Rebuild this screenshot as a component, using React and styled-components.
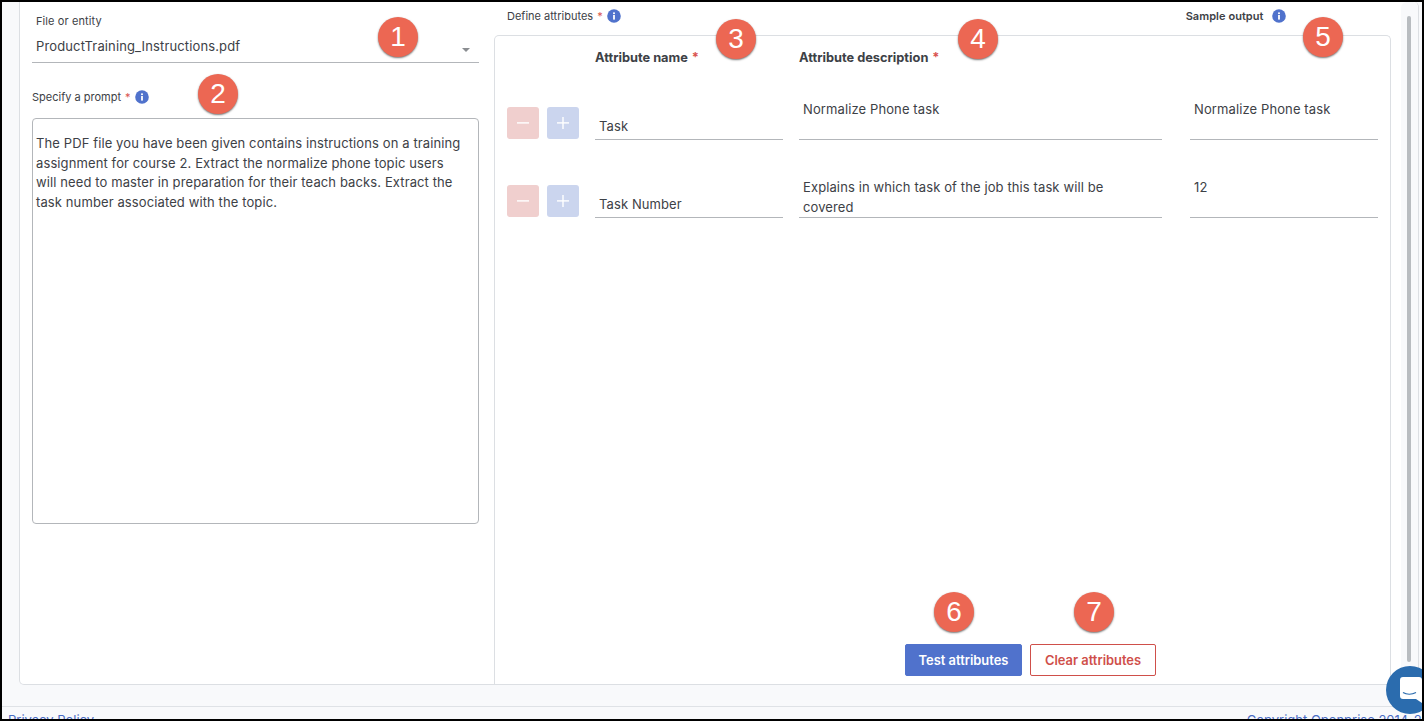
import React from "react";
import styled, { createGlobalStyle } from "styled-components";

const GlobalStyle = createGlobalStyle`
  html, body {
    margin: 0;
    height: 100%;
    overflow: hidden;
    background: #000;
  }
  * { box-sizing: border-box; }
`;

const Frame = styled.div`
  width: 1424px;
  height: 721px;
  padding: 2px;
  background: #000;
  font-family: Inter, "Noto Sans", sans-serif;
  color: #3d4146;
  overflow: hidden;
`;

const Page = styled.div`
  position: relative;
  height: 717px;
  background: #f8f9fb;
  display: flex;
  flex-direction: column;
  overflow: hidden;
`;

const Body = styled.div`
  height: 705px;
  flex: none;
  border-bottom: 1px solid #dfe2e6;
  padding: 0 3px 0 17px;
`;

const Card = styled.main`
  height: 683px;
  background: #fff;
  border: 1px solid #dcdfe3;
  border-top: 0;
  border-radius: 0 5px 5px 5px;
  display: flex;
`;

const LeftColumn = styled.section`
  width: 474px;
  flex: none;
  padding: 12px 15px 0 12px;
`;

const RightColumn = styled.section`
  flex: 1;
  display: flex;
  flex-direction: column;
  min-width: 0;
`;

const FieldLabel = styled.div`
  font-size: 11px;
  line-height: 14px;
  letter-spacing: 0.1px;
  padding-left: 4px;
`;

const SelectBox = styled.div`
  height: 35px;
  display: flex;
  align-items: center;
  justify-content: space-between;
  padding: 1px 4px 0 4px;
  font-size: 13px;
  letter-spacing: 0.13px;
  border-bottom: 1px solid #b3b6ba;
`;

const Caret = styled.span`
  width: 0;
  height: 0;
  margin-top: 8px;
  margin-right: 5px;
  border-left: 4px solid transparent;
  border-right: 4px solid transparent;
  border-top: 4px solid #8a8d91;
`;

const PromptLabel = styled.div`
  display: flex;
  align-items: center;
  margin-top: 26px;
  height: 16px;
  font-size: 11px;
`;

const Star = styled.span`
  color: #d9534f;
  margin-left: 4px;
`;

const InfoDot = styled.svg`
  width: 14px;
  height: 14px;
  margin-left: ${(p) => p.$gap}px;
  flex: none;
`;

const PromptBox = styled.div`
  margin-top: 13px;
  height: 406px;
  border: 1px solid #b3b6ba;
  border-radius: 4px;
  padding: 15px 12px 15px 3px;
  font-size: 13px;
  line-height: 19.6px;
  letter-spacing: 0.11px;
`;

const AttributesHead = styled.div`
  height: 33px;
  display: flex;
  align-items: center;
  padding: 0 0 6px 13px;
  font-size: 11px;
`;

const SampleLabel = styled.span`
  margin-left: 565px;
  font-weight: 600;
  letter-spacing: 0.05px;
`;

const AttributesPanel = styled.div`
  flex: 1;
  margin-right: 10px;
  border: 1px solid #dcdfe3;
  border-bottom: 0;
  border-radius: 5px 5px 0 0;
  display: flex;
  flex-direction: column;
`;

const gridColumns = "72px 188px 363px 188px";

const HeadRow = styled.div`
  display: grid;
  grid-template-columns: ${gridColumns};
  column-gap: 16px;
  padding: 14px 0 0 12px;
  font-size: 12.8px;
  font-weight: 700;
  line-height: 16px;
`;

const AttributeRow = styled.div`
  display: grid;
  grid-template-columns: ${gridColumns};
  column-gap: 16px;
  padding-left: 12px;
  height: 41px;
  margin-top: ${(p) => p.$top}px;
`;

const RowButtons = styled.div`
  display: flex;
  gap: 8px;
  align-self: end;
  margin-bottom: 1px;
`;

const SquareButton = styled.button`
  width: 32px;
  height: 32px;
  padding: 0;
  border: 0;
  border-radius: 3px;
  background: ${(p) => (p.$tone === "red" ? "#f0cfce" : "#cbd5ee")};
  display: flex;
  align-items: center;
  justify-content: center;
`;

const NameCell = styled.div`
  align-self: stretch;
  display: flex;
  align-items: flex-end;
  padding: 0 4px 3px;
  font-size: 13px;
  line-height: 20px;
  letter-spacing: 0.1px;
  border-bottom: 1px solid #b3b6ba;
`;

const TextCell = styled.div`
  align-self: stretch;
  padding: 0 24px 0 4px;
  font-size: 13px;
  line-height: 20px;
  letter-spacing: 0.11px;
  border-bottom: 1px solid #b3b6ba;
`;

const OutputCell = styled(TextCell)`
  margin-left: 12px;
  width: 188px;
`;

const ActionBar = styled.div`
  margin-top: auto;
  display: flex;
  gap: 8px;
  padding: 0 0 8px 410px;
`;

const ActionButton = styled.button`
  height: 32px;
  width: ${(p) => p.$width}px;
  border-radius: 2px;
  font-family: inherit;
  font-size: 12.9px;
  font-weight: 600;
  padding: 0;
  color: ${(p) => (p.$outline ? "#cf4f4a" : "#fff")};
  background: ${(p) => (p.$outline ? "#fff" : "#5072cc")};
  border: 1px solid ${(p) => (p.$outline ? "#cf4f4a" : "#5072cc")};
`;

const ScrollTrack = styled.div`
  width: 17px;
  flex: none;
  padding: 14px 6px 0 6px;
  background: #f8f9fb;
  border-radius: 6px 6px 0 0;
`;

const ScrollThumb = styled.div`
  width: 4px;
  height: 646px;
  border-radius: 2px;
  background: #b8bcc0;
`;

const FooterBar = styled.footer`
  flex: none;
  width: 1449px;
  display: flex;
  justify-content: space-between;
  padding: 6px 5px 0 6px;
  font-size: 13px;
  line-height: 14px;
  color: #4a6cc4;
`;

const Badge = styled.div`
  position: absolute;
  left: ${(p) => p.$x - 22}px;
  top: ${(p) => p.$y - 22}px;
  width: 40px;
  height: 40px;
  border-radius: 50%;
  background: #ec6753;
  box-shadow: 0 1px 2px rgba(0, 0, 0, 0.55);
  color: #fff;
  font-family: "Liberation Sans", Arial, sans-serif;
  font-size: 28px;
  line-height: 40px;
  text-align: center;
`;

const ChatBubble = styled.div`
  position: absolute;
  left: 1384px;
  top: 664px;
  width: 48px;
  height: 48px;
  border-radius: 50%;
  background: #2b6cae;
  display: flex;
  align-items: center;
  padding-left: 14px;
`;

const Info = ({ gap = 4 }) => (
  <InfoDot viewBox="0 0 14 14" $gap={gap}>
    <circle cx="7" cy="7" r="6.8" fill="#5072cc" />
    <rect x="6.1" y="6" width="1.8" height="4.6" fill="#fff" />
    <rect x="6.1" y="3.4" width="1.8" height="1.7" fill="#fff" />
  </InfoDot>
);

const Minus = () => (
  <svg width="14" height="14" viewBox="0 0 14 14">
    <rect x="1" y="6.2" width="12" height="1.4" fill="#fff" />
  </svg>
);

const Plus = () => (
  <svg width="14" height="14" viewBox="0 0 14 14">
    <rect x="1" y="6.2" width="12" height="1.4" fill="#fff" />
    <rect x="6.3" y="1" width="1.4" height="12" fill="#fff" />
  </svg>
);

const badges = [
  [1, 398, 37],
  [2, 218, 94],
  [3, 736, 39],
  [4, 978, 39],
  [5, 1323, 37],
  [6, 954, 612],
  [7, 1094, 612],
];

const rows = [
  { name: "Task", description: "Normalize Phone task", output: "Normalize Phone task", top: 33 },
  {
    name: "Task Number",
    description: "Explains in which task of the job this task will be covered",
    output: "12",
    top: 37,
  },
];

const App = () => (
  <Frame>
    <GlobalStyle />
    <Page>
      <Body>
        <Card>
          <LeftColumn>
            <FieldLabel>File or entity</FieldLabel>
            <SelectBox>
              ProductTraining_Instructions.pdf
              <Caret />
            </SelectBox>
            <PromptLabel>
              Specify a prompt<Star>*</Star>
              <Info />
            </PromptLabel>
            <PromptBox>
              The PDF file you have been given contains instructions on a training assignment for
              course 2. Extract the normalize phone topic users will need to master in preparation
              for their teach backs. Extract the task number associated with the topic.
            </PromptBox>
          </LeftColumn>
          <RightColumn>
            <AttributesHead>
              Define attributes<Star>*</Star>
              <Info />
              <SampleLabel>Sample output</SampleLabel>
              <Info gap={8} />
            </AttributesHead>
            <AttributesPanel>
              <HeadRow>
                <span />
                <span>
                  Attribute name<Star>*</Star>
                </span>
                <span>
                  Attribute description<Star>*</Star>
                </span>
              </HeadRow>
              {rows.map((row) => (
                <AttributeRow key={row.name} $top={row.top}>
                  <RowButtons>
                    <SquareButton $tone="red">
                      <Minus />
                    </SquareButton>
                    <SquareButton $tone="blue">
                      <Plus />
                    </SquareButton>
                  </RowButtons>
                  <NameCell>{row.name}</NameCell>
                  <TextCell>{row.description}</TextCell>
                  <OutputCell>{row.output}</OutputCell>
                </AttributeRow>
              ))}
              <ActionBar>
                <ActionButton $width={117}>Test attributes</ActionButton>
                <ActionButton $width={126} $outline>
                  Clear attributes
                </ActionButton>
              </ActionBar>
            </AttributesPanel>
          </RightColumn>
          <ScrollTrack>
            <ScrollThumb />
          </ScrollTrack>
        </Card>
      </Body>
      <FooterBar>
        <span>Privacy Policy</span>
        <span>Copyright Openprise 2014-2024</span>
      </FooterBar>
      {badges.map(([n, x, y]) => (
        <Badge key={n} $x={x} $y={y}>
          {n}
        </Badge>
      ))}
      <ChatBubble>
        <svg width="24" height="26" viewBox="0 0 24 26">
          <path d="M3 0h16a3 3 0 0 1 3 3v23l-6-4H3a3 3 0 0 1-3-3V3a3 3 0 0 1 3-3z" fill="#fff" />
          <path d="M3 15.5c3.5 2.2 9 2.2 13 0" stroke="#2b6cae" strokeWidth="1.3" fill="none" />
        </svg>
      </ChatBubble>
    </Page>
  </Frame>
);

export default App;
